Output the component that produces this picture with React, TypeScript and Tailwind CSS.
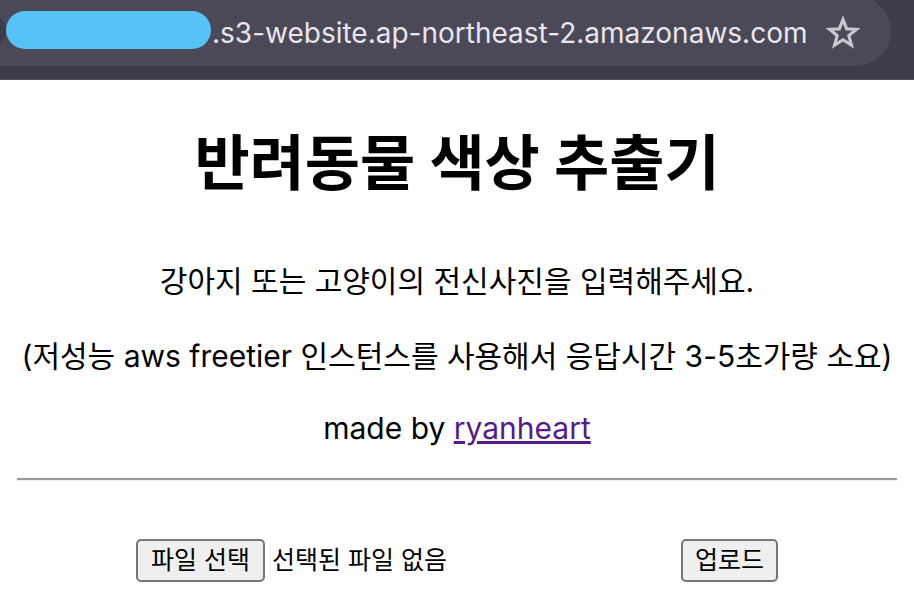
import React from "react";

const KR = "font-['Inter','Noto_Sans_CJK_KR',sans-serif]";

function StarIcon() {
  return (
    <svg width="34" height="34" viewBox="0 0 24 24" fill="none" stroke="#c9c7cf" strokeWidth="2.2" strokeLinejoin="miter">
      <polygon points="12,2.5 14.6,9.1 21.5,9.4 16.1,13.8 18,20.7 12,16.8 6,20.7 7.9,13.8 2.5,9.4 9.4,9.1" />
    </svg>
  );
}

export default function App() {
  return (
    <div className="w-[914px] h-[616px] overflow-hidden bg-white">
      {/* Browser chrome */}
      <div className="relative h-[80px] bg-[#3e3b4b] overflow-hidden">
        <div className="flex items-center h-[70px] -mt-[4px] -ml-[40px] w-[931px] rounded-r-full bg-[#4b4858]">
          <div className="w-[32px] h-[32px] rounded-full bg-[#3e3b4b] ml-[14px]" />
          <div className={`ml-[206px] text-[28px] text-[#e8e6ec] ${KR} mt-[4px] whitespace-nowrap`}>
            .s3-website.ap-northeast-2.amazonaws.com
          </div>
          <div className="ml-[19px] mt-[4px]">
            <StarIcon />
          </div>
        </div>
        <div className="absolute left-[6px] top-[11px] w-[205px] h-[38px] rounded-full bg-[#56c3f6]" />
        <div className="absolute left-0 right-0 bottom-0 h-[1px] bg-[#55525f]" />
      </div>

      {/* Page */}
      <div className={`flex flex-col items-center text-black ${KR}`}>
        <h1 className="mt-[43px] h-[80px] leading-[80px] text-[60px] font-bold whitespace-nowrap">반려동물 색상 추출기</h1>
        <p className="mt-[58px] h-[40px] leading-[40px] text-[30px] whitespace-nowrap">강아지 또는 고양이의 전신사진을 입력해주세요.</p>
        <p className="mt-[35px] h-[40px] leading-[40px] text-[30px] whitespace-nowrap">(저성능 aws freetier 인스턴스를 사용해서 응답시간 3-5초가량 소요)</p>
        <p className="mt-[32px] h-[40px] leading-[40px] text-[30px] whitespace-nowrap">
          made by <a href="#" className="text-[#551a8b] underline">ryanheart</a>
        </p>
      </div>
      <div className="mt-[30px] mx-[17px] border-t-2 border-b border-t-[#9b9b9b] border-b-[#eeeeee]" />
      <div className={`mt-[58px] flex justify-center ${KR}`}>
        <div className="flex items-center">
          <div className="w-[541px] flex items-center">
            <button className="h-[43px] px-[13px] text-[25px] bg-[#efefef] border-2 border-[#767676] rounded-[5px] text-black whitespace-nowrap">파일 선택</button>
            <span className="ml-[7px] text-[25px] text-black whitespace-nowrap">선택된 파일 없음</span>
          </div>
          <button className="ml-[4px] h-[43px] px-[12px] text-[25px] bg-[#efefef] border-2 border-[#767676] rounded-[5px] text-black whitespace-nowrap">업로드</button>
        </div>
      </div>
    </div>
  );
}
